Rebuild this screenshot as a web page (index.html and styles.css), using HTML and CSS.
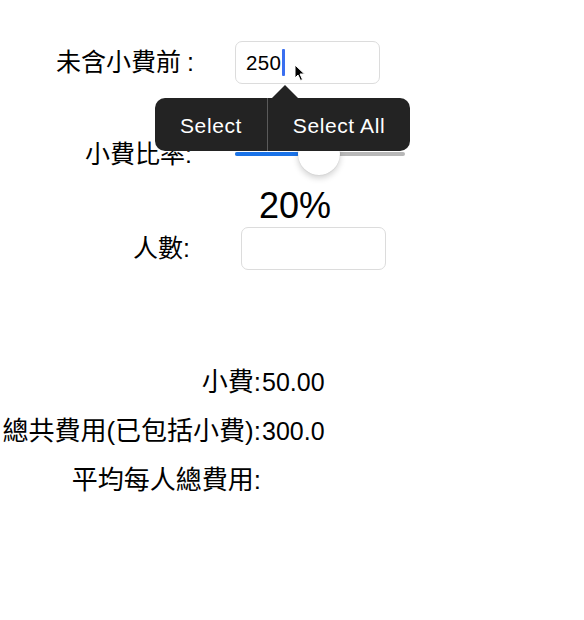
FILE: index.html
```html
<!DOCTYPE html>
<html>
<head>
<meta charset="utf-8">
<link rel="stylesheet" href="styles.css">
</head>
<body>
<div class="page">
  <div class="row row-bill">
    <label class="label">未含小費前<span class="colon-wide">:</span></label>
    <div class="field">
      <span class="value">250</span><span class="caret"></span>
      <svg class="pointer" width="12" height="18" viewBox="0 0 12 18"><path d="M1 1 L1 14 L4 11 L6.5 16.5 L8.5 15.5 L6 10 L10.5 10 Z" fill="#000" stroke="#fff" stroke-width="1"/></svg>
    </div>
  </div>
  <div class="row row-rate">
    <label class="label">小費比率:</label>
    <div class="slider">
      <div class="track-fill"></div>
      <div class="thumb"></div>
    </div>
  </div>
  <div class="percent">20%</div>
  <div class="row row-people">
    <label class="label">人數:</label>
    <div class="field field-empty"></div>
  </div>
  <div class="results">
    <div class="result"><span class="r-label">小費:</span><span class="r-value">50.00</span></div>
    <div class="result"><span class="r-label">總共費用(已包括小費):</span><span class="r-value">300.0</span></div>
    <div class="result"><span class="r-label">平均每人總費用:</span><span class="r-value"></span></div>
  </div>
  <div class="menu">
    <div class="menu-arrow"></div>
    <div class="menu-item menu-select">Select</div>
    <div class="menu-sep"></div>
    <div class="menu-item menu-all">Select All</div>
  </div>
</div>
</body>
</html>
```
FILE: styles.css
```css
html, body {
  margin: 0;
  padding: 0;
  background: #fff;
}
body {
  font-family: "Liberation Sans", "Noto Sans CJK TC", sans-serif;
  color: #000;
}
.page {
  position: relative;
  width: 584px;
  height: 620px;
  padding-top: 41px;
  box-sizing: border-box;
}
.row {
  display: flex;
  align-items: center;
}
.label {
  font-size: 25px;
  text-align: right;
  box-sizing: border-box;
  line-height: 1;
  white-space: nowrap;
}
.colon-wide {
  margin-left: 6px;
}
.row-bill .label { width: 194px; }
.row-bill .field { margin-left: 41px; }
.field {
  position: relative;
  width: 145px;
  height: 43px;
  border: 1px solid #dcdcdc;
  border-radius: 7px;
  box-sizing: border-box;
  display: flex;
  align-items: center;
  padding-left: 10px;
}
.value {
  font-size: 20.5px;
  letter-spacing: 0.3px;
}
.caret {
  display: inline-block;
  width: 3px;
  height: 27px;
  margin-left: 1px;
  background: #3a6ff0;
  border-radius: 1px;
}
.pointer {
  position: absolute;
  left: 58px;
  top: 22px;
}
.row-rate {
  margin-top: 59px;
  height: 22px;
}
.row-rate .label { width: 192px; }
.slider {
  position: relative;
  margin-left: 43px;
  width: 170px;
  height: 4px;
  background: #b8b8b8;
  border-radius: 2px;
}
.track-fill {
  width: 64px;
  height: 4px;
  background: #1a73e8;
  border-radius: 2px;
}
.thumb {
  position: absolute;
  left: 63px;
  top: -19px;
  width: 42px;
  height: 42px;
  border-radius: 50%;
  background: #fff;
  box-shadow: 0 3px 6px rgba(0,0,0,0.18), 0 0 1px rgba(0,0,0,0.2);
}
.percent {
  margin-top: 21px;
  width: 590px;
  text-align: center;
  font-size: 36px;
  line-height: 40px;
}
.row-people {
  margin-top: 1px;
}
.row-people .label { width: 190px; }
.row-people .field { margin-left: 51px; }
.results {
  margin-top: 99px;
  display: flex;
  flex-direction: column;
  gap: 23px;
}
.result {
  display: flex;
  align-items: baseline;
  height: 26px;
}
.r-label {
  width: 261px;
  text-align: right;
  white-space: nowrap;
  font-size: 26px;
  line-height: 26px;
}
.r-value {
  padding-left: 1px;
  font-size: 25px;
  line-height: 26px;
}
.menu {
  position: absolute;
  left: 155px;
  top: 98px;
  width: 255px;
  height: 53px;
  background: #232323;
  border-radius: 10px;
  display: flex;
  align-items: center;
  color: #fff;
  font-size: 21px;
  letter-spacing: 0.6px;
}
.menu-arrow {
  position: absolute;
  left: 117px;
  top: -13px;
  width: 0;
  height: 0;
  border-left: 13px solid transparent;
  border-right: 13px solid transparent;
  border-bottom: 13px solid #232323;
}
.menu-item {
  height: 100%;
  display: flex;
  align-items: center;
  justify-content: center;
  padding-top: 3px;
  box-sizing: border-box;
}
.menu-select { width: 112px; }
.menu-all { flex: 1; }
.menu-sep {
  width: 1px;
  height: 100%;
  background: #5a5a5a;
}
```
